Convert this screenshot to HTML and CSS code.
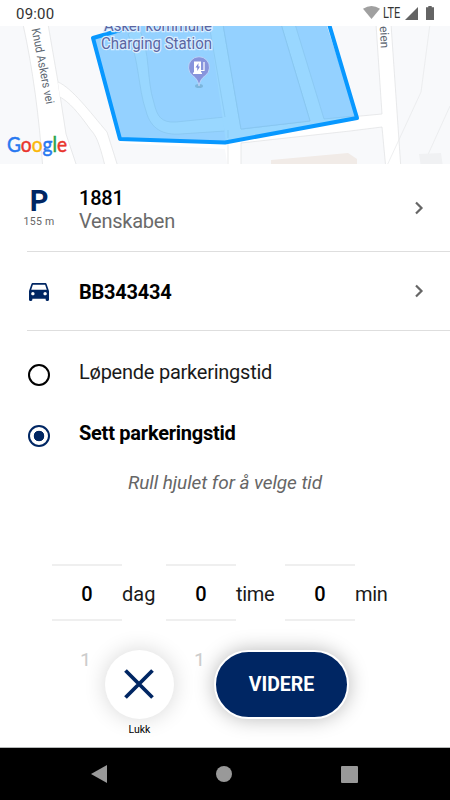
FILE: index.html
```html
<!DOCTYPE html>
<html lang="no">
<head>
<meta charset="utf-8">
<title>Parkering</title>
<link rel="stylesheet" href="styles.css">
</head>
<body>
<div class="screen">
  <header class="status">
    <span class="clock">09:00</span>
    <div class="signals">
      <svg class="wifi" width="17" height="13" viewBox="0 0 17 13"><path d="M0 2.8Q8.500 -2.600 17 2.800L8.500 13Z"/></svg>
      <span class="lte">LTE</span>
      <svg class="cell" width="13" height="13" viewBox="0 0 13 13"><path d="M13 0V13H0Z"/></svg>
      <svg class="battery" width="8" height="14" viewBox="0 0 8 14"><path d="M2.300 0h3.400v1.300H8V14H0V1.300h2.300Z"/></svg>
    </div>
  </header>

  <svg class="map" width="450" height="138" viewBox="0 26 450 138">
    <rect y="26" width="450" height="138" fill="#f8f9fb"/>
    <g fill="#fff" stroke="#dfe1e3" stroke-width=".7">
      <path d="M120 143L225 149 228 170H241V143L350 131 382 127 386 170H401L391 24H376L382 114 340 118 226 136 120 135Z" stroke="none"/>
      <path d="M228 170V143M241 170V143L350 131 382 127 386 170M401 170L391 24M376 24L382 114 350 117" fill="none"/>
      <path d="M23 24C33 70 39 116 43 170H78L66 134 58 82 48 24Z"/>
      <path d="M58 82C72 88 90 112 107 132L119 170H106C98 137 95 135 90 129C78 112 69 102 60 97"/>
    </g>
    <path d="M430 24L421 92 385 170M450 106L421 170" fill="none" stroke="#e6e8ea" stroke-width=".7"/>
    <path d="M419 154l22-1 2 14h-22Z" fill="#f0f1f3"/>
    <path d="M271 160l77-7 9 6v8h-86Z" fill="#f1ebe7"/>
    <path class="zone" d="M93 38L134 26 148 20H325L357 118 225 142.500 120 139Z"/>
    <g class="lanes">
      <path d="M128 34C139 58 138 88 146 111C151 130 164 135 180 134L225 131V117L176 122C161 123 157 116 154 103C146 78 151 54 139 28Z"/>
      <path d="M209 24L226 142 240 140V130L310 121 281 24H295L324 119 354 117V120L226 141L223 24Z" stroke="none"/>
      <path d="M209 24L225 117V131L226 142L241 138V129L223 24Z" stroke="none"/>
      <path d="M223 24L241 129 310 121 281 24M295 24L324 119 354 116" fill="none"/>
      <path d="M209 24L225 117M228 130v8" fill="none"/>
    </g>
    <path d="M223 24L241 129 310 121 281 24Z" fill="#94d1ff" stroke="#85c3eb" stroke-width=".6"/>
    <path class="zone-edge" d="M134 26L93 38 120 139 225 142.500 357 118 329 24"/>
    <g class="place">
      <text x="104" y="31" textLength="108" lengthAdjust="spacingAndGlyphs">Asker kommune</text>
      <text x="101" y="49" textLength="111" lengthAdjust="spacingAndGlyphs">Charging Station</text>
    </g>
    <ellipse cx="199" cy="86" rx="4" ry="2" fill="#7bb5dc"/>
    <path d="M199 86Q198 79 192.500 75.500A10.500 10.500 0 1 1 205.500 75.500Q200 79 199 86Z" fill="#8794dc" stroke="#c4d9fa" stroke-width=".8"/>
    <path d="M194 61.500h7v11.500h-7ZM193 72.500h9v1.500h-9Z" fill="#fff"/>
    <path d="M201 70.500h3V62M204 62v5" fill="none" stroke="#fff" stroke-width="1.200"/>
    <path d="M198.500 63l-3 4.600h1.800v3.400l2.700-4.500h-1.700Z" fill="#7d87d7"/>
    <g class="road">
      <text transform="translate(31.500 29) rotate(79)" textLength="77" lengthAdjust="spacingAndGlyphs">Knud Askers vei</text>
      <text transform="translate(379.500 20.500) rotate(87)" textLength="28" lengthAdjust="spacingAndGlyphs">veien</text>
    </g>
    <text class="brand" x="7" y="152" textLength="60" lengthAdjust="spacingAndGlyphs"><tspan fill="#2878f0" stroke="#2878f0">G</tspan><tspan fill="#e9352d" stroke="#e9352d">o</tspan><tspan fill="#fbb70a" stroke="#fbb70a">o</tspan><tspan fill="#2878f0" stroke="#2878f0">g</tspan><tspan fill="#24a44a" stroke="#24a44a">l</tspan><tspan fill="#e9352d" stroke="#e9352d">e</tspan></text>
  </svg>

  <main>
    <section class="row place-row">
      <div class="lead"><span class="p-mark">P</span><span class="distance">155 m</span></div>
      <div class="info"><span class="code">1881</span><span class="street">Venskaben</span></div>
      <svg class="chevron" width="10" height="14" viewBox="0 0 10 14"><path d="M2 1.500L7.500 7 2 12.500"/></svg>
    </section>
    <section class="row car-row">
      <div class="lead">
        <svg width="20" height="18" viewBox="3 5 18 16"><path fill="#002663" d="M18.920 6.010C18.720 5.420 18.160 5 17.500 5h-11c-.66 0-1.210.42-1.420 1.010L3 12v8c0 .55.45 1 1 1h1c.55 0 1-.45 1-1v-1h12v1c0 .55.45 1 1 1h1c.55 0 1-.45 1-1v-8l-2.080-5.990zM6.500 16c-.83 0-1.500-.67-1.500-1.500S5.670 13 6.500 13s1.500.67 1.500 1.500S7.330 16 6.500 16zm11 0c-.83 0-1.500-.67-1.500-1.500s.67-1.500 1.500-1.500 1.500.67 1.500 1.500-.67 1.500-1.500 1.500zM5 11l1.500-4.500h11L19 11H5z"/></svg>
      </div>
      <div class="info"><span class="plate">BB343434</span></div>
      <svg class="chevron" width="10" height="14" viewBox="0 0 10 14"><path d="M2 1.500L7.500 7 2 12.500"/></svg>
    </section>

    <div class="options">
      <div class="option"><span class="radio"></span><span class="running">Løpende parkeringstid</span></div>
      <div class="option"><span class="radio on"></span><span class="fixed">Sett parkeringstid</span></div>
    </div>
    <p class="hint">Rull hjulet for å velge tid</p>

    <div class="wheels">
      <div class="wheel"><span class="value">0</span><span class="next">1</span></div><span class="unit dag">dag</span>
      <div class="wheel"><span class="value">0</span><span class="next">1</span></div><span class="unit time">time</span>
      <div class="wheel"><span class="value">0</span></div><span class="unit min">min</span>
    </div>

    <div class="actions">
      <div class="close">
        <div class="close-btn"><svg width="30" height="30" viewBox="0 0 30 30"><path d="M1.500 1.500L28.500 28.500M28.500 1.500L1.500 28.500"/></svg></div>
        <span class="close-label">Lukk</span>
      </div>
      <div class="go"><span>VIDERE</span></div>
    </div>
  </main>

  <nav class="navbar">
    <svg width="16" height="18" viewBox="0 0 16 18"><path d="M16 0V18L0 9Z"/></svg>
    <svg width="16" height="16" viewBox="0 0 16 16"><circle cx="8" cy="8" r="8"/></svg>
    <svg width="17" height="17" viewBox="0 0 17 17"><rect width="17" height="17" rx="1"/></svg>
  </nav>
</div>
</body>
</html>
```
FILE: styles.css
```css
* { box-sizing: border-box; }
body { margin: 0; font-family: Roboto, sans-serif; color: #000; background: #fff; }
svg { display: block; flex: none; }
.screen { width: 450px; height: 800px; overflow: hidden; display: flex; flex-direction: column; background: #fff; }

.status { height: 26px; flex: none; display: flex; justify-content: space-between; padding: 0 16px 0 15px; color: #333; }
.clock { font-size: 15px; line-height: 28px; letter-spacing: .2px; padding-left: 1px; }
.signals { display: flex; align-items: flex-start; padding-top: 6px; }
.wifi { fill: #a0a0a0; margin-right: -1px; }
.lte { font-size: 14.5px; line-height: 15px; width: 19px; margin: 0 3px 0 4px; transform: scaleX(.76); transform-origin: 0 0; white-space: nowrap; }
.cell { fill: #646464; margin-top: 1px; }
.battery { fill: #646464; margin-left: 8px; }

.map { flex: none; }
.zone { fill: #94d1ff; }
.lanes { fill: #99d7ff; stroke: #85c3eb; stroke-width: .6; }
.zone-edge { fill: none; stroke: #0898ff; stroke-width: 4; stroke-linejoin: round; }
.place { font-size: 16px; fill: #5b65a2; stroke: #d9edff; stroke-width: 2.5px; paint-order: stroke; }
.road { font-size: 12px; fill: #5e6873; }
.brand { font-family: Lato, sans-serif; font-size: 21.5px; stroke-width: .5px; }

main { flex: 1; display: flex; flex-direction: column; }
.row { margin-left: 27px; border-bottom: 1px solid #dedede; display: flex; }
.place-row { height: 88px; padding-top: 23px; }
.car-row { height: 79px; align-items: center; }
.lead { width: 24px; display: flex; flex-direction: column; align-items: center; flex: none; }
.car-row .lead { padding-top: 1px; }
.info { width: 330px; margin-left: 28px; display: flex; flex-direction: column; font-size: 20px; line-height: 23px; }
.p-mark { font-weight: 700; font-size: 29px; line-height: 28px; color: #002663; }
.distance { font-size: 10.5px; line-height: 14px; color: #666; white-space: nowrap; letter-spacing: .25px; }
.code { font-weight: 500; letter-spacing: -.2px; }
.street { color: #6a6a6a; letter-spacing: -.25px; }
.plate { font-weight: 700; letter-spacing: -.25px; padding-top: 2px; }
.chevron { margin-left: 5px; fill: none; stroke: #666; stroke-width: 2.2; }
.place-row .chevron { margin-top: 14px; }

.options { padding: 33px 0 0 28px; display: flex; flex-direction: column; gap: 39px; font-size: 20px; line-height: 22px; }
.option { display: flex; gap: 29px; height: 22px; }
.option > span:last-child { margin-top: -3px; }
.radio { width: 22px; height: 22px; border: 2px solid #000; border-radius: 50%; }
.radio.on { border-color: #002663; background: radial-gradient(circle, #002663 5px, #fff 5.600px); }
.option > .running { letter-spacing: -.24px; color: #1a1a1a; margin-top: -4px; }
.fixed { font-weight: 700; letter-spacing: -.25px; }
.hint { margin: 25px 0 0; text-align: center; font-size: 19px; line-height: 22px; font-style: italic; color: #666; letter-spacing: -.07px; }

.wheels { margin: 70px 0 0 52px; display: flex; height: 57px; font-size: 20px; flex: none; }
.wheel { position: relative; width: 70px; border: solid #efefef; border-width: 2px 0; text-align: center; line-height: 56px; }
.value { font-weight: 500; }
.next { position: absolute; left: 28px; top: 83px; height: 17px; line-height: 24px; overflow: hidden; color: #ccc; }
.unit { line-height: 60px; color: #1a1a1a; letter-spacing: -.3px; }
.dag { width: 44px; letter-spacing: 0; }
.time { width: 49px; }

.actions { display: flex; padding-left: 105px; margin-top: 29px; }
.close { width: 69px; display: flex; flex-direction: column; align-items: center; }
.close-btn { width: 69px; height: 69px; border-radius: 50%; display: flex; align-items: center; justify-content: center; box-shadow: 0 0 22px rgba(0, 0, 0, .16); background: #fff; position: relative; }
.close-btn svg { margin: -1px 1px 0 0; }
.close-btn path { stroke: #002663; stroke-width: 3.8; fill: none; }
.close-label { font-size: 10.5px; line-height: 14px; margin-top: 4px; }
.go { margin-left: 40px; width: 135px; height: 69px; border: 2px solid #fff; border-radius: 35px; background: #002663; color: #fff; font-weight: 700; font-size: 19.5px; display: flex; align-items: center; justify-content: center; box-shadow: 0 0 20px rgba(0, 0, 0, .28); }

.navbar { height: 53px; flex: none; background: #000; border-top: 1px solid #b5b8b8; display: flex; align-items: center; padding-left: 91px; gap: 109px; }
.navbar svg { fill: #999; }
```
